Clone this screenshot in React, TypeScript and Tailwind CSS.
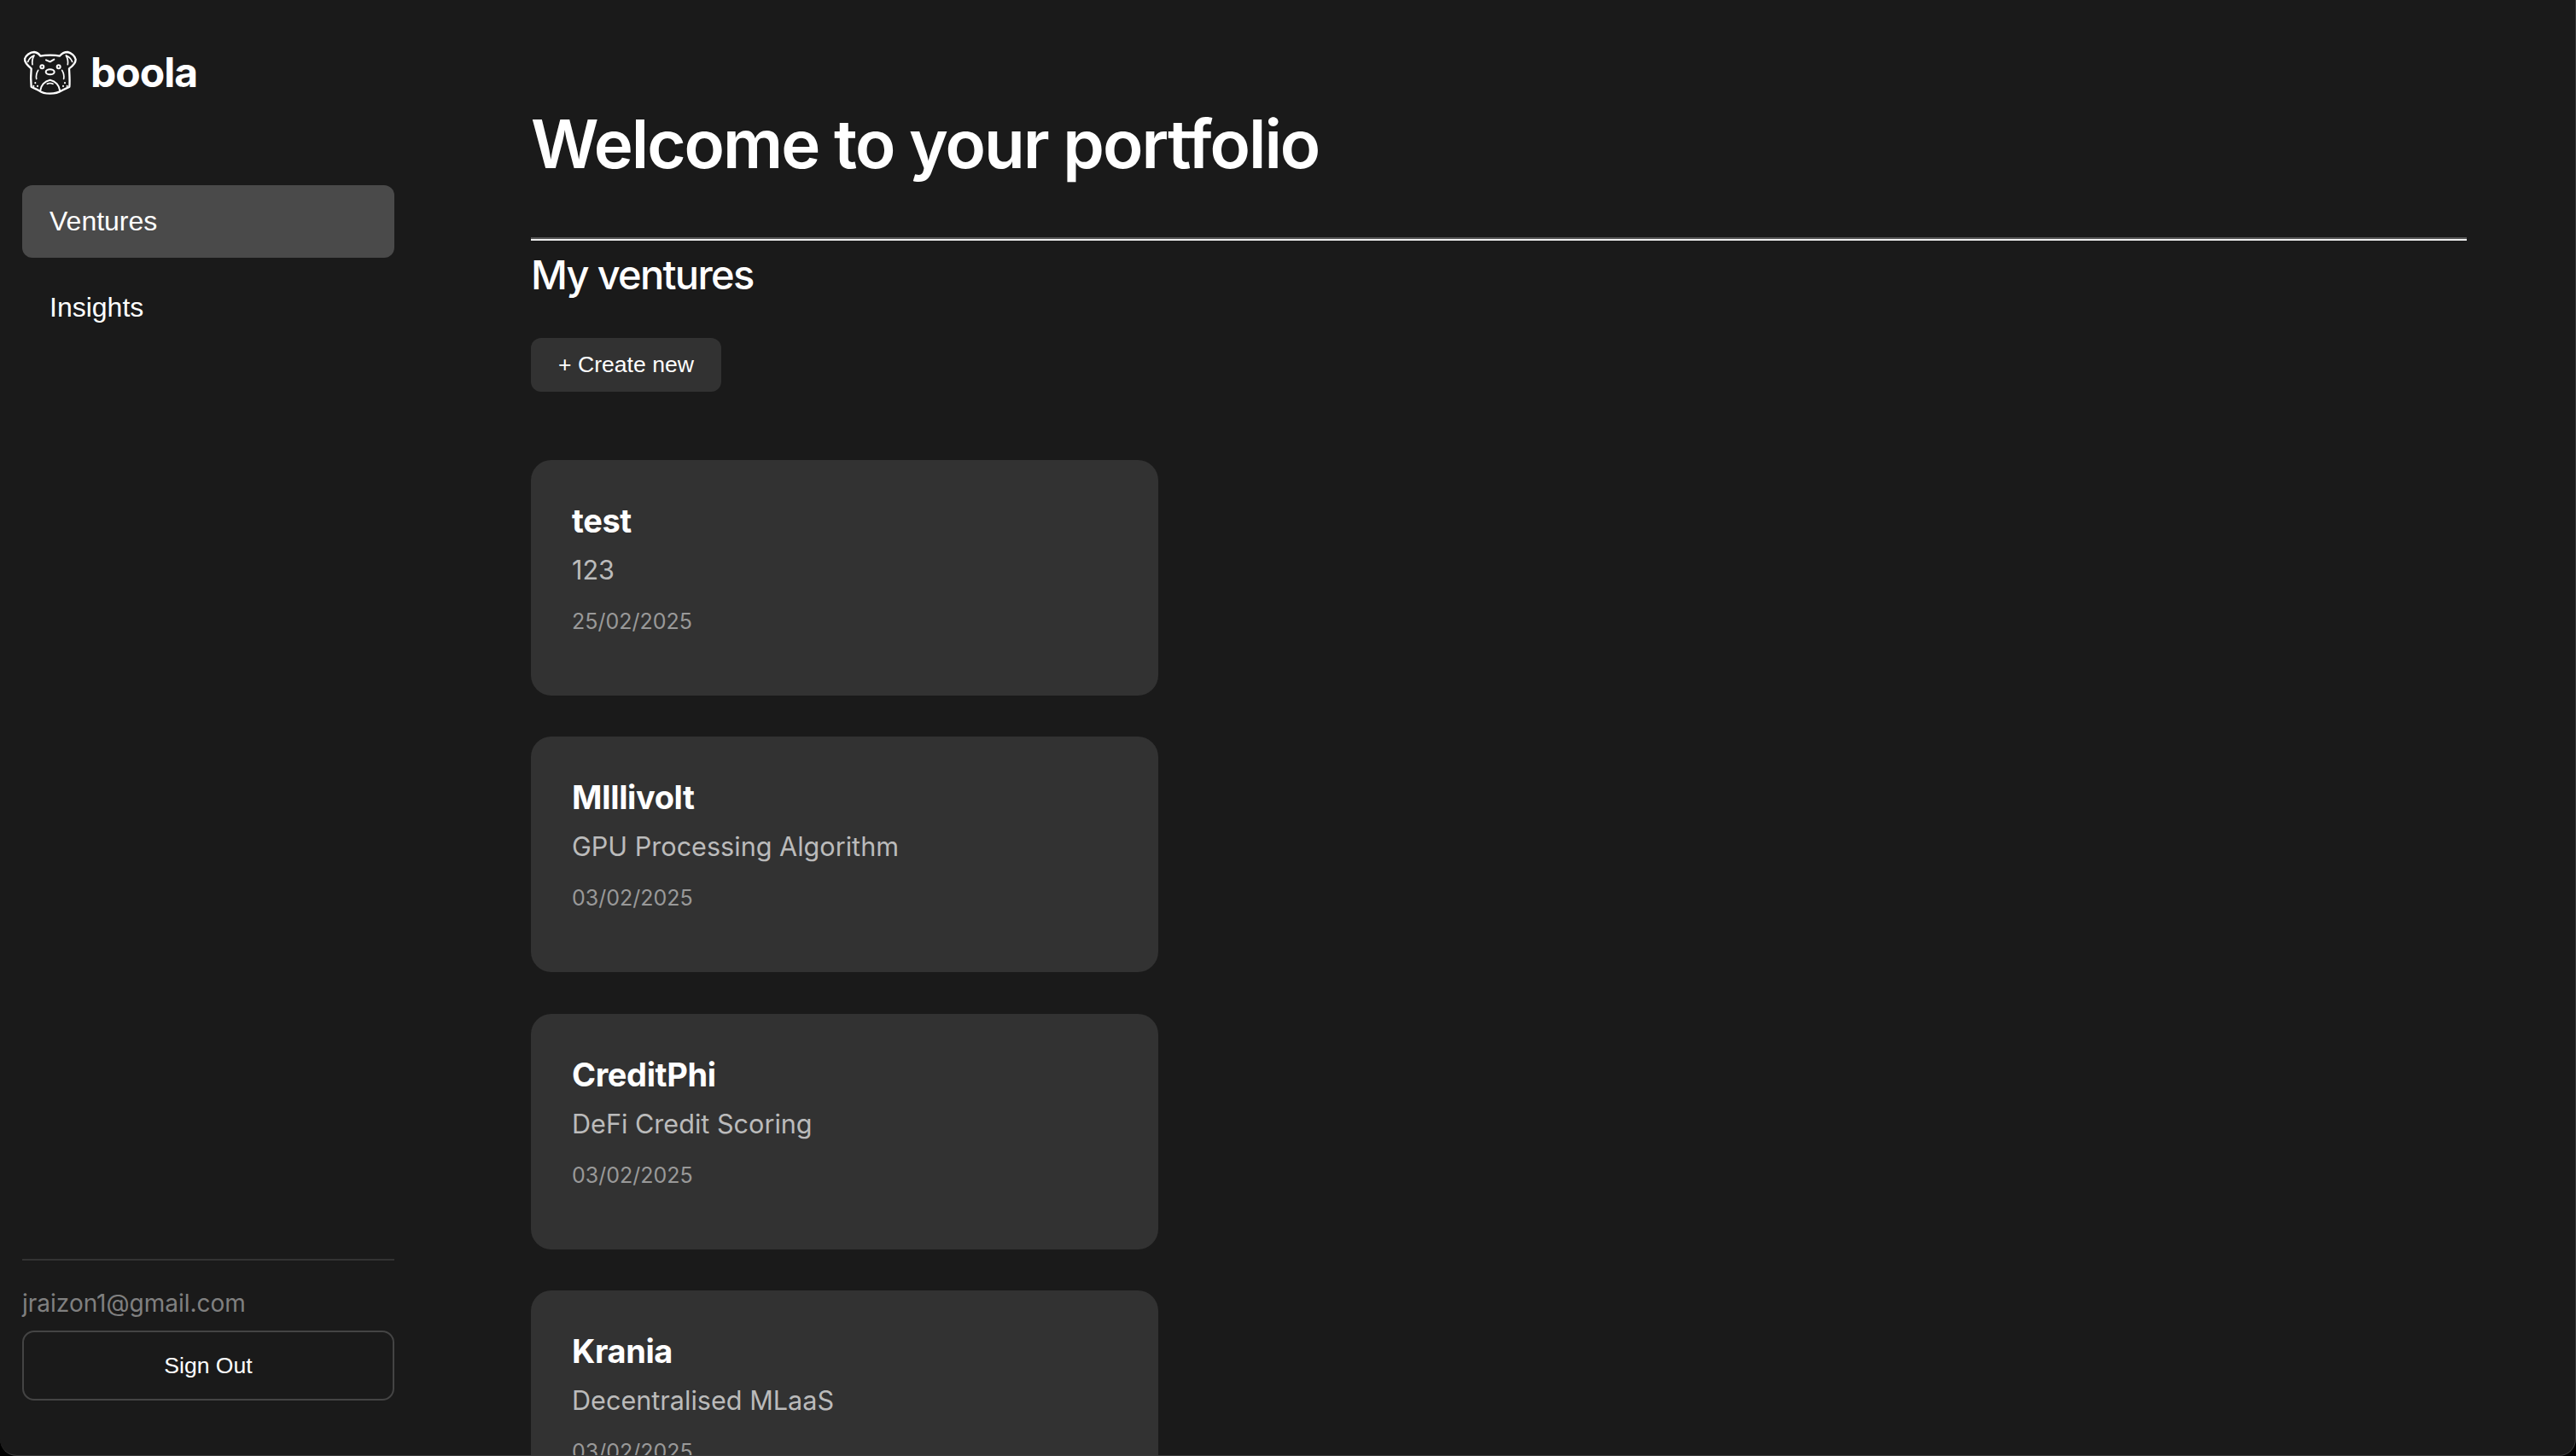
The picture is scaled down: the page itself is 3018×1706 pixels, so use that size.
const ventures = [
  { name: 'test', description: '123', date: '25/02/2025' },
  { name: 'MIllivolt', description: 'GPU Processing Algorithm', date: '03/02/2025' },
  { name: 'CreditPhi', description: 'DeFi Credit Scoring', date: '03/02/2025' },
  { name: 'Krania', description: 'Decentralised MLaaS', date: '03/02/2025' },
];

function BulldogLogo() {
  return (
    <svg viewBox="30 35 198 162" className="w-[66px] h-[54px] shrink-0" fill="none" stroke="white" strokeWidth="7" strokeLinecap="round" strokeLinejoin="round">
      <path d="M62 102 C50 92 38 80 39 68 C42 56 58 44 72 44 C82 45 90 52 94 58 C112 54 146 54 162 58 C168 50 178 44 190 44 C202 46 216 58 218 70 C218 82 206 94 195 102 C196 122 198 146 196 166 C186 172 176 174 168 180 C156 188 142 190 128 190 C114 190 100 188 90 180 C82 174 72 172 62 166 C60 146 60 122 62 102 Z" />
      <path d="M50 78 C54 68 62 60 72 56 M72 56 C66 66 64 76 66 88" strokeWidth="5" />
      <path d="M206 78 C202 68 194 60 184 56 M184 56 C190 66 192 76 190 88" strokeWidth="5" />
      <path d="M114 72 L128 78 L142 70" strokeWidth="6" />
      <circle cx="100" cy="96" r="6" strokeWidth="6" />
      <circle cx="158" cy="96" r="6" strokeWidth="6" />
      <ellipse cx="128" cy="114" rx="15" ry="9" strokeWidth="6" />
      <path d="M86 108 C80 118 78 128 80 138 M170 108 C176 118 178 128 176 138" strokeWidth="5" />
      <path d="M94 178 C96 162 108 146 128 142 C148 146 160 162 162 178" strokeWidth="6" />
      <path d="M118 156 C124 153 132 153 138 156" strokeWidth="5" />
      <path d="M76 152 L76 153 M70 163 L70 164 M84 163 L84 164 M180 152 L180 153 M174 163 L174 164 M188 163 L188 164" strokeWidth="6" />
    </svg>
  );
}

export default function App() {
  return (
    <div className="h-screen bg-black">
      <div className="h-full overflow-hidden flex rounded-b-[20px] border-r border-b border-[#3a3a3a] bg-[#1a1a1a] text-white font-['Inter',sans-serif]">
        <aside className="w-[488px] shrink-0 flex flex-col px-[26px] pt-[54px] pb-[64px]">
          <div className="flex items-center gap-[14px] h-[62px]">
            <BulldogLogo />
            <span className="text-[48px] leading-none font-bold tracking-[-1px]">boola</span>
          </div>
          <nav className="mt-[101px] flex flex-col gap-[16px]">
            <a className="h-[85px] pb-[2px] flex items-center px-[32px] rounded-[12px] bg-[#4a4a4a] text-[32px] font-['Liberation_Sans',sans-serif]">Ventures</a>
            <a className="h-[85px] pb-[2px] flex items-center px-[32px] rounded-[12px] text-[32px] font-['Liberation_Sans',sans-serif]">Insights</a>
          </nav>
          <div className="mt-auto border-t-2 border-[#333333] pt-[32px]">
            <p className="text-[28px] leading-[36px] text-[#808080]">jraizon1@gmail.com</p>
            <button className="mt-[14px] w-full h-[82px] pt-[2px] rounded-[14px] border-2 border-[#444444] text-[26.6px] font-['Liberation_Sans',sans-serif]">Sign Out</button>
          </div>
        </aside>
        <main className="flex-1 min-w-0 pl-[134px] pr-[127px] pt-[121px]">
          <h1 className="text-[78px] leading-[96px] font-semibold tracking-[-2px] [font-feature-settings:'calt'_0,'liga'_0,'dlig'_0]">Welcome to your portfolio</h1>
          <div className="mt-[61px] h-[4px] border-t-2 border-b-2 border-t-[#555555] border-b-[#eeeeee]" />
          <h2 className="mt-[11px] text-[47px] leading-[58px] font-medium tracking-[-1.7px]">My ventures</h2>
          <button className="mt-[45px] block w-[223px] h-[63px] rounded-[12px] bg-[#323232] text-[26.6px] font-['Liberation_Sans',sans-serif]">+ Create new</button>
          <div className="mt-[80px] flex flex-col gap-[48.3px] w-[735px]">
            {ventures.map((venture) => (
              <div key={venture.name} className="h-[276px] shrink-0 rounded-[24px] bg-[#323232] px-[48px] pt-[47px]">
                <h3 className="text-[38px] leading-[48px] font-bold tracking-[-0.4px]">{venture.name}</h3>
                <p className="mt-[10px] text-[30.6px] leading-[48px] text-[#bbbbbb]">{venture.description}</p>
                <p className="mt-[18px] text-[25px] leading-[36px] text-[#999999]">{venture.date}</p>
              </div>
            ))}
          </div>
        </main>
      </div>
    </div>
  );
}
